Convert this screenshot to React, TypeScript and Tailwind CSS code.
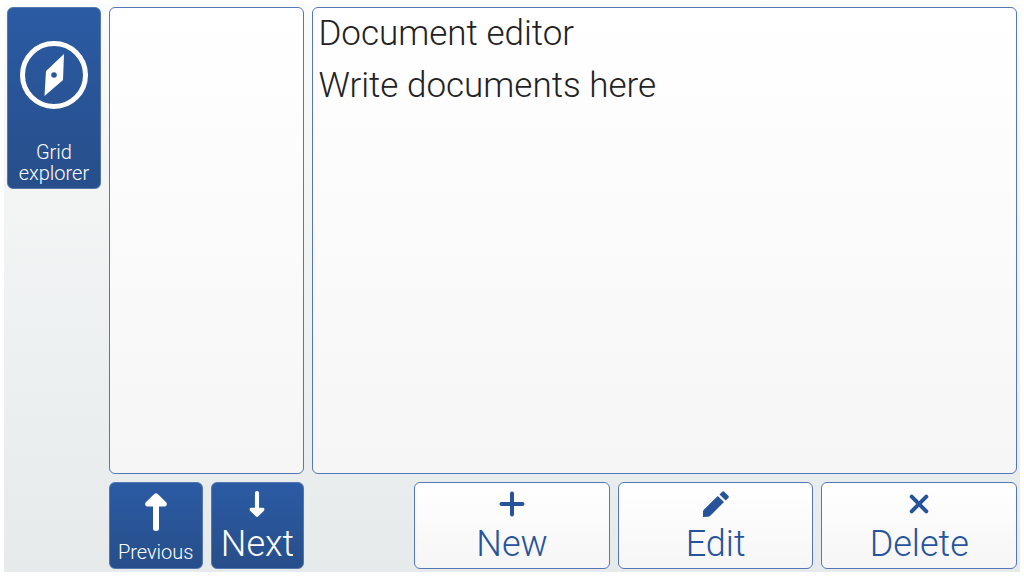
import { ReactNode } from "react";

interface CellProps {
    label: string,
    icon: ReactNode,
    className: string,
    labelClassName: string,
    variant: "solid" | "outline",
}

const variants = {
    solid: "border-[#5577ae] bg-linear-to-b from-[#2b5ba4] to-[#274e8a] text-white",
    outline: "border-[#5577b3] bg-linear-to-b from-white to-[#f6f6f6] text-[#27539b]",
};

function Cell({ label, icon, className, labelClassName, variant }: CellProps) {
    return (
        <button
            type="button"
            className={`flex min-h-0 min-w-0 cursor-pointer flex-col items-center rounded-md border ${variants[variant]} ${className}`}
        >
            <span className="flex min-h-0 flex-1 items-center justify-center">{icon}</span>
            <span className={labelClassName}>{label}</span>
        </button>
    );
}

function CompassIcon() {
    return (
        <svg viewBox="0 0 68 68" className="size-[68px]" fill="currentColor" aria-hidden="true">
            <circle cx="34" cy="34" r="31.5" fill="none" stroke="currentColor" strokeWidth="5" />
            <path
                fillRule="evenodd"
                d="M44 13 L43 39 L24.500 55 L26 30 Z M34 31.200 a2.800 2.800 0 1 0 0 5.600 a2.800 2.800 0 1 0 0 -5.600 Z"
            />
        </svg>
    );
}

function ArrowIcon({ className }: { className: string }) {
    return (
        <svg viewBox="0 0 22 38" className={className} fill="currentColor" aria-hidden="true">
            <path d="M9.500 0.700 Q11 -0.400 12.500 0.700 L21.200 9.300 Q22.600 11.500 21 13 Q20.200 13.600 18.500 13.600 H14 V35.500 Q14 38 11 38 Q8 38 8 35.500 V13.600 H3.500 Q1.800 13.600 1 13 Q-0.600 11.500 0.800 9.300 Z" />
        </svg>
    );
}

function PlusIcon() {
    return (
        <svg viewBox="0 0 26 26" className="size-[26px]" stroke="currentColor" strokeWidth="4" strokeLinecap="round" aria-hidden="true">
            <path d="M13 2.500 V23.500 M2.500 13 H23.500" />
        </svg>
    );
}

function PencilIcon() {
    return (
        <svg viewBox="0 0 26 26" className="size-[26px]" fill="currentColor" aria-hidden="true">
            <path d="M0 26 V20.500 Q0.200 19.300 1 18.500 L14.800 5 L21 11 L7.500 24.500 Q6.500 25.600 5.200 25.700 Z" />
            <path d="M16.500 3.400 L19 0.900 Q20.200 -0.200 21.500 0.900 L25.300 4.800 Q26.300 6 25.300 7 L22.700 9.500 Z" />
        </svg>
    );
}

function CrossIcon() {
    return (
        <svg viewBox="0 0 20 20" className="size-5" stroke="currentColor" strokeWidth="4" strokeLinecap="round" aria-hidden="true">
            <path d="M2.700 2.700 L17.300 17.300 M17.300 2.700 L2.700 17.300" />
        </svg>
    );
}

export default function App() {
    return (
        <div className="h-screen bg-white p-1 font-['Roboto',sans-serif] font-light">
            <main className="grid h-full grid-cols-10 grid-rows-6 gap-2 bg-linear-to-b from-[#fafbfb] to-[#e6eaea] p-[3px]">
                <Cell
                    label="Grid explorer"
                    variant="solid"
                    icon={<CompassIcon />}
                    className="row-span-2 pb-1"
                    labelClassName="text-xl/[21px]"
                />

                {/* Document list */}
                <section
                    aria-label="Documents"
                    className="col-span-2 row-span-5 rounded-md border border-[#5577b3] bg-linear-to-b from-white to-[#f6f6f6]"
                />

                {/* Preview of the selected document */}
                <section className="col-span-7 row-span-5 rounded-md border border-[#5577b3] bg-linear-to-b from-white to-[#f6f6f6] px-[5px] text-[35px]/[52px] text-[#222222]">
                    <h1>Document editor</h1>
                    <p>Write documents here</p>
                </section>

                {/* Actions */}
                <Cell
                    label="Previous"
                    variant="solid"
                    icon={<ArrowIcon className="h-[38px] w-[22px]" />}
                    className="col-start-2 row-start-6 pb-1"
                    labelClassName="text-xl/6"
                />
                <Cell
                    label="Next"
                    variant="solid"
                    icon={<ArrowIcon className="h-[26px] w-4 rotate-180" />}
                    className="col-start-3 row-start-6 pb-1"
                    labelClassName="text-4xl/10"
                />
                <Cell
                    label="New"
                    variant="outline"
                    icon={<PlusIcon />}
                    className="col-span-2 col-start-5 row-start-6 pb-1"
                    labelClassName="text-4xl/10"
                />
                <Cell
                    label="Edit"
                    variant="outline"
                    icon={<PencilIcon />}
                    className="col-span-2 col-start-7 row-start-6 pb-1"
                    labelClassName="text-4xl/10"
                />
                <Cell
                    label="Delete"
                    variant="outline"
                    icon={<CrossIcon />}
                    className="col-span-2 col-start-9 row-start-6 pb-1"
                    labelClassName="text-4xl/10"
                />
            </main>
        </div>
    );
}
